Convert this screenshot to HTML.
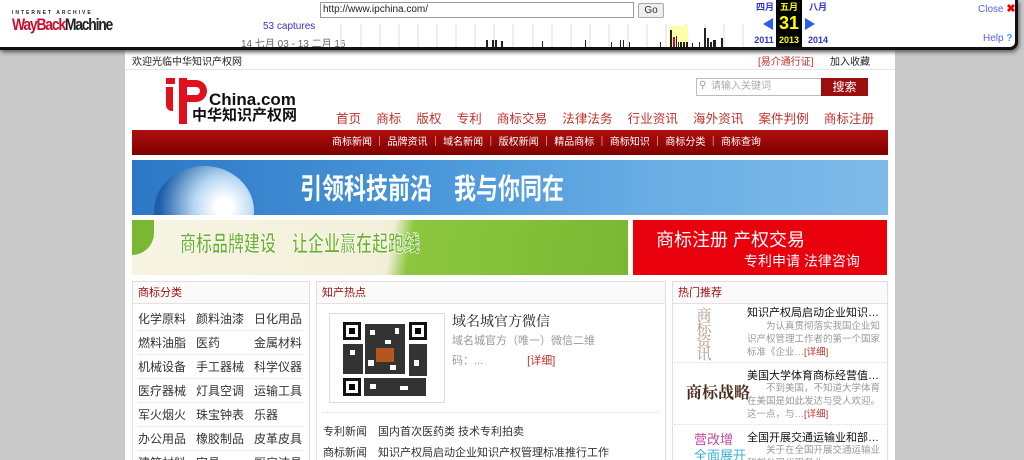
<!DOCTYPE html>
<html><head><meta charset="utf-8"><style>
*{margin:0;padding:0;box-sizing:border-box}
html,body{width:1024px;height:460px;overflow:hidden}
body{background:#c9c9c9;font-family:"Liberation Sans","Noto Sans CJK SC",sans-serif;position:relative;font-size:12px;color:#333}
.a{position:absolute;white-space:nowrap}
#wb{left:0;top:0;width:1018px;height:50px;background:#fff;border-bottom:3px solid #111;border-right:3px solid #111;border-bottom-right-radius:8px;box-shadow:1px 2px 4px #555;z-index:2;overflow:hidden}
#page{left:125px;top:50px;width:770px;height:410px;background:#fff}
.nav span{margin-right:15px}
.red{color:#c0312b}
.box{border:1px solid #e3dede;border-bottom:none;background:#fff;overflow:hidden}
.hd{height:22px;border-bottom:1px solid #e8e0e0;color:#a01010;font-size:11px;line-height:22px;padding-left:5px;background:#fafafa}
.cat div{height:24px;line-height:24px;border-bottom:1px dotted #ddd;font-size:12px;color:#333;white-space:nowrap}
.cat span{display:inline-block;width:58px}
</style></head><body>
<div id="wb" class="a">
 <div class="a" style="left:12px;top:10px;font-size:5px;letter-spacing:2px;font-weight:bold;color:#222">INTERNET ARCHIVE</div>
 <div class="a" style="left:12px;top:15px;font-size:17px;font-weight:bold;letter-spacing:-1.5px;line-height:20px;transform:scaleX(0.82);transform-origin:left"><span style="color:#c8102e">WayBack</span><span style="color:#222">Machine</span></div>
 <div class="a" style="left:320px;top:2px;width:314px;height:16px;border:1px solid #999;font-size:10px;line-height:14px;padding-left:2px;color:#222">http://www.ipchina.com/</div>
 <div class="a" style="left:638px;top:3px;width:26px;height:15px;border:1px solid #aaa;background:#eee;font-size:10px;text-align:center;line-height:13px;border-radius:2px">Go</div>
 <div class="a" style="left:263px;top:21px;font-size:10px;color:#3333cc">53 captures</div>
 <div class="a" style="left:241px;top:35px;font-size:10px;color:#666;background:#fff">14 七月 03 - 13 二月 16</div>
 <svg class="a" style="left:340px;top:24px" width="410" height="24">
  <g stroke="#ddd"><line x1="1" y1="0" x2="1" y2="24"/><line x1="21" y1="0" x2="21" y2="24"/><line x1="40" y1="0" x2="40" y2="24"/><line x1="59" y1="0" x2="59" y2="24"/><line x1="78" y1="0" x2="78" y2="24"/><line x1="97" y1="0" x2="97" y2="24"/><line x1="116" y1="0" x2="116" y2="24"/><line x1="135" y1="0" x2="135" y2="24"/><line x1="154" y1="0" x2="154" y2="24"/><line x1="173" y1="0" x2="173" y2="24"/><line x1="193" y1="0" x2="193" y2="24"/><line x1="212" y1="0" x2="212" y2="24"/><line x1="231" y1="0" x2="231" y2="24"/><line x1="250" y1="0" x2="250" y2="24"/><line x1="269" y1="0" x2="269" y2="24"/><line x1="288" y1="0" x2="288" y2="24"/><line x1="307" y1="0" x2="307" y2="24"/><line x1="326" y1="0" x2="326" y2="24"/><line x1="346" y1="0" x2="346" y2="24"/><line x1="365" y1="0" x2="365" y2="24"/><line x1="384" y1="0" x2="384" y2="24"/><line x1="403" y1="0" x2="403" y2="24"/></g>
  <rect x="329" y="2" width="19" height="22" fill="#ffffa8"/>
  <g fill="#222"><rect x="146" y="16" width="2" height="7"/><rect x="152" y="16" width="2" height="7"/><rect x="155" y="16" width="2" height="7"/><rect x="161" y="17" width="2" height="6"/><rect x="202" y="17" width="1" height="6"/><rect x="245" y="16" width="1" height="7"/><rect x="271" y="18" width="1" height="5"/><rect x="280" y="16" width="1" height="7"/><rect x="283" y="16" width="1" height="7"/><rect x="289" y="18" width="1" height="5"/><rect x="320" y="18" width="1" height="5"/><rect x="330" y="6" width="2" height="17"/><rect x="336" y="12" width="1" height="11"/><rect x="338" y="18" width="1" height="5"/><rect x="340" y="18" width="2" height="5"/><rect x="343" y="18" width="2" height="5"/><rect x="346" y="18" width="2" height="5"/><rect x="352" y="19" width="1" height="4"/><rect x="359" y="18" width="1" height="5"/><rect x="364" y="4" width="2" height="19"/><rect x="367" y="14" width="2" height="9"/><rect x="370" y="18" width="2" height="5"/><rect x="373" y="16" width="3" height="7"/><rect x="381" y="14" width="2" height="9"/></g>
  <rect x="333" y="13" width="2" height="10" fill="#c0006a"/>
 </svg>
 <div class="a" style="left:751px;top:1px;width:28px;text-align:center;font-size:9px;font-weight:bold;color:#3333cc;line-height:12px">四月</div>
 <div class="a" style="left:776px;top:0;width:26px;height:48px;background:#000"></div>
 <div class="a" style="left:776px;top:1px;width:26px;text-align:center;font-size:9px;font-weight:bold;color:#ff0;line-height:12px">五月</div>
 <div class="a" style="left:776px;top:12px;width:26px;text-align:center;font-size:18px;font-weight:bold;color:#ff0;line-height:22px">31</div>
 <div class="a" style="left:776px;top:34px;width:26px;text-align:center;font-size:9px;font-weight:bold;color:#ff0;line-height:12px">2013</div>
 <div class="a" style="left:804px;top:1px;width:28px;text-align:center;font-size:9px;font-weight:bold;color:#3333cc;line-height:12px">八月</div>
 <div class="a" style="left:751px;top:34px;width:26px;text-align:center;font-size:9px;font-weight:bold;color:#3333cc;line-height:12px">2011</div>
 <div class="a" style="left:804px;top:34px;width:28px;text-align:center;font-size:9px;font-weight:bold;color:#3333cc;line-height:12px">2014</div>
 <svg class="a" style="left:762px;top:17px" width="12" height="14"><polygon points="11,1 11,13 1,7" fill="#2a5ee8"/></svg>
 <svg class="a" style="left:804px;top:17px" width="12" height="14"><polygon points="1,1 1,13 11,7" fill="#2a5ee8"/></svg>
 <div class="a" style="left:978px;top:3px;font-size:10px;color:#5566dd;line-height:12px">Close <b style="color:#e00;font-size:11px">✖</b></div>
 <div class="a" style="left:983px;top:33px;font-size:10px;color:#5566dd;line-height:12px">Help <b style="color:#3aa0ff">?</b></div>
</div>
<div id="page" class="a"></div>
<div class="a" style="left:132px;top:53px;font-size:10px;color:#222">欢迎光临中华知识产权网</div>
<div class="a" style="left:758px;top:53px;font-size:10px;color:#c0312b">[易介通行证]</div>
<div class="a" style="left:830px;top:53px;font-size:10px;color:#222">加入收藏</div>
<div class="a" style="left:125px;top:69px;width:770px;border-top:1px solid #e6e6e6"></div>
<div class="a" style="left:166px;top:78px;width:9px;height:6px;background:#e0101e"></div>
<div class="a" style="left:166px;top:87px;width:7px;height:24px;background:#e0101e;border-bottom-left-radius:6px"></div>
<div class="a" style="left:179px;top:78px;width:8px;height:46px;background:#e0101e"></div>
<div class="a" style="left:179px;top:80px;width:28px;height:22px;border:7px solid #e0101e;border-left:none;border-radius:0 12px 12px 0"></div>
<div class="a" style="left:209px;top:92px;font-size:17px;font-weight:bold;color:#111;line-height:16px">China.com</div>
<div class="a" style="left:192px;top:108px;font-size:15px;font-weight:bold;color:#111;line-height:16px">中华知识产权网</div>
<div class="a" style="left:696px;top:78px;width:126px;height:18px;border:1px solid #bbb;font-size:10px;color:#aaa;line-height:16px;padding-left:14px">请输入关键词</div>
<div class="a" style="left:699px;top:80px;font-size:10px;color:#999">⚲</div>
<div class="a" style="left:821px;top:78px;width:47px;height:18px;background:#9a0e0e;color:#fff;font-size:12px;text-align:center;line-height:18px">搜索</div>
<div class="a nav red" style="left:336px;top:108px;font-size:12.5px;letter-spacing:0.1px"><span>首页</span><span>商标</span><span>版权</span><span>专利</span><span>商标交易</span><span>法律法务</span><span>行业资讯</span><span>海外资讯</span><span>案件判例</span><span>商标注册</span></div>
<div class="a" style="left:132px;top:130px;width:756px;height:25px;background:linear-gradient(#b00e0e,#7e0000);color:#fff;font-size:10px;line-height:25px;padding-left:200px">商标新闻 ｜ 品牌资讯 ｜ 域名新闻 ｜ 版权新闻 ｜ 精品商标 ｜ 商标知识 ｜ 商标分类 ｜ 商标查询</div>
<div class="a" style="left:132px;top:160px;width:756px;height:55px;background:linear-gradient(90deg,#2c78c6,#4a97da 40%,#6aaee4 70%,#7fbbe9);overflow:hidden">
 <div class="a" style="left:22px;top:6px;width:100px;height:90px;border-radius:50%;background:radial-gradient(circle at 70% 45%,#fff 10%,#b8d8f2 35%,#1d5fa8 75%)"></div>
 <div class="a" style="left:168px;top:10px;font-size:22px;font-weight:bold;color:#fff;line-height:30px;transform:scaleY(1.3);transform-origin:top">引领科技前沿　我与你同在</div>
</div>
<div class="a" style="left:132px;top:220px;width:496px;height:55px;background:linear-gradient(100deg,#f7f4e4 0%,#f2efd9 52%,#8cc63f 56%,#7ab833 100%)"></div>
<div class="a" style="left:132px;top:220px;width:22px;height:35px;background:#7ab833;border-bottom-right-radius:22px"></div>
<div class="a" style="left:180px;top:232px;font-size:16px;font-weight:bold;color:#6db02e;line-height:20px;transform:scale(1,1.4);transform-origin:top left;-webkit-text-stroke:0.5px #fff">商标品牌建设　让企业赢在起跑线</div>
<div class="a" style="left:633px;top:220px;width:254px;height:55px;background:#e8000c"></div>
<div class="a" style="left:656px;top:228px;font-size:18px;color:#fff;line-height:24px">商标注册 产权交易</div>
<div class="a" style="left:744px;top:252px;font-size:14px;color:#fff;line-height:18px">专利申请 法律咨询</div>
<div class="a box" style="left:132px;top:281px;width:178px;height:179px">
 <div class="hd">商标分类</div>
 <div class="cat" style="padding:3px 5px">
  <div><span>化学原料</span><span>颜料油漆</span>日化用品</div>
  <div><span>燃料油脂</span><span>医药</span>金属材料</div>
  <div><span>机械设备</span><span>手工器械</span>科学仪器</div>
  <div><span>医疗器械</span><span>灯具空调</span>运输工具</div>
  <div><span>军火烟火</span><span>珠宝钟表</span>乐器</div>
  <div><span>办公用品</span><span>橡胶制品</span>皮革皮具</div>
  <div><span>建筑材料</span><span>家具</span>厨房洁具</div>
  <div><span>绳网袋篷</span><span>纱线丝</span>布料床单</div>
 </div>
</div>
<div class="a box" style="left:316px;top:281px;width:350px;height:179px">
 <div class="hd">知产热点</div>
</div>
<div class="a" style="left:329px;top:313px;width:116px;height:90px;border:1px solid #ddd;background:#fff"></div>
<svg class="a" style="left:340px;top:320px" width="90" height="78">
 <rect x="0" y="0" width="90" height="78" fill="#fff"/>
 <g fill="#111">
  <rect x="3" y="2" width="18" height="18"/><rect x="69" y="2" width="18" height="18"/><rect x="3" y="58" width="18" height="18"/>
  <rect x="25" y="4" width="40" height="50" fill="#333"/><rect x="24" y="58" width="62" height="18" fill="#333"/><rect x="3" y="24" width="20" height="30" fill="#333"/><rect x="69" y="24" width="18" height="32" fill="#333"/>
 </g>
 <g fill="#fff"><rect x="6" y="5" width="12" height="12"/><rect x="72" y="5" width="12" height="12"/><rect x="6" y="61" width="12" height="12"/>
 <rect x="30" y="10" width="5" height="5"/><rect x="45" y="20" width="6" height="4"/><rect x="55" y="8" width="4" height="6"/><rect x="28" y="40" width="6" height="6"/><rect x="10" y="30" width="5" height="5"/><rect x="74" y="40" width="5" height="6"/><rect x="30" y="64" width="6" height="5"/><rect x="60" y="66" width="8" height="4"/><rect x="50" y="45" width="6" height="5"/></g>
 <g fill="#000"><rect x="9" y="8" width="6" height="6"/><rect x="75" y="8" width="6" height="6"/><rect x="9" y="64" width="6" height="6"/></g>
 <rect x="36" y="28" width="18" height="14" fill="#b5561e"/>
</svg>
<div class="a" style="left:452px;top:311px;font-size:14px;color:#222;font-family:'Liberation Serif','Noto Serif CJK SC',serif">域名城官方微信</div>
<div class="a" style="left:452px;top:331px;font-size:11px;color:#999;line-height:20px;width:180px">域名城官方（唯一）微信二维<br>码：...　　　　<span style="color:#c0312b">[详细]</span></div>
<div class="a" style="left:322px;top:412px;width:338px;border-top:1px dotted #ddd"></div>
<div class="a" style="left:323px;top:422px;font-size:11px;color:#333;line-height:21px">专利新闻　国内首次医药类 技术专利拍卖<br>商标新闻　知识产权局启动企业知识产权管理标准推行工作</div>
<div class="a box" style="left:672px;top:281px;width:216px;height:179px">
 <div class="hd">热门推荐</div>
</div>
<div class="a" style="left:676px;top:304px;width:56px;height:58px;font-size:15px;color:#b09a8a;text-align:center;line-height:13px;padding-top:4px;font-family:'Noto Serif CJK SC',serif">商<br>标<br>资<br>讯</div>
<div class="a" style="left:686px;top:380px;font-size:16px;font-weight:bold;color:#4a2b1a;font-family:'Noto Serif CJK SC',serif">商标战略</div>
<div class="a" style="left:694px;top:432px;font-size:13px;color:#c34aa0;line-height:16px">营改增<br><span style="color:#3ab0d0">全面展开</span></div>
<div class="a" style="left:747px;top:304px;font-size:11px;color:#111">知识产权局启动企业知识…</div>
<div class="a" style="left:747px;top:320px;width:134px;font-size:9.5px;color:#999;line-height:13px;text-indent:2em;white-space:normal">为认真贯彻落实我国企业知识产权管理工作者的第一个国家标准《企业…<span style="color:#c0312b">[详细]</span></div>
<div class="a" style="left:674px;top:362px;width:212px;border-top:1px dotted #ddd"></div>
<div class="a" style="left:747px;top:367px;font-size:11px;color:#111">美国大学体育商标经营值…</div>
<div class="a" style="left:747px;top:382px;width:134px;font-size:9.5px;color:#999;line-height:13px;text-indent:2em;white-space:normal">不到美国，不知道大学体育在美国是如此发达与受人欢迎。这一点，与…<span style="color:#c0312b">[详细]</span></div>
<div class="a" style="left:674px;top:424px;width:212px;border-top:1px dotted #ddd"></div>
<div class="a" style="left:747px;top:429px;font-size:11px;color:#111">全国开展交通运输业和部…</div>
<div class="a" style="left:747px;top:444px;width:134px;height:16px;overflow:hidden;font-size:9.5px;color:#999;line-height:13px;text-indent:2em;white-space:normal">关于在全国开展交通运输业和部分现代服务业</div>
</body></html>
